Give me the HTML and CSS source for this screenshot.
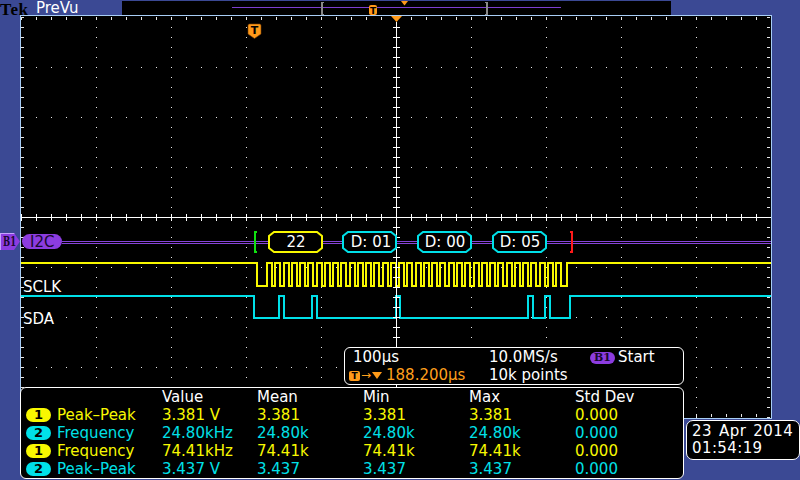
FILE: index.html
```html
<!DOCTYPE html>
<html>
<head>
<meta charset="utf-8">
<link rel="stylesheet" href="styles.css">
</head>
<body>
<div class="scope">
  <header class="topbar">
    <span class="tek">Tek</span>
    <span class="prevu">PreVu</span>
    <div class="recview">
      <svg width="549" height="14" viewBox="122 1 549 14" shape-rendering="crispEdges">
        <rect x="232" y="7" width="329" height="1" fill="#7d3fd0"/>
        <rect x="321" y="2" width="2" height="13" fill="#8a8a8a"/>
        <rect x="321" y="2" width="3" height="1" fill="#8a8a8a"/>
        <rect x="321" y="14" width="3" height="1" fill="#8a8a8a"/>
        <rect x="486" y="2" width="2" height="13" fill="#8a8a8a"/>
        <rect x="485" y="2" width="3" height="1" fill="#8a8a8a"/>
        <rect x="485" y="14" width="3" height="1" fill="#8a8a8a"/>
        <rect x="369" y="5" width="8" height="10" rx="2" fill="#ff9a1a" shape-rendering="auto"/>
        <text x="373" y="13.5" class="mk-t small">T</text>
        <polygon points="401,1 408,1 404.5,5.5" fill="#ff9a1a" shape-rendering="auto"/>
      </svg>
    </div>
  </header>

  <div class="main">
    <div class="gutter">
      <div class="b1tag"><span class="b1txt">B1</span></div>
    </div>
    <div class="screen">
      <svg width="750" height="402" viewBox="21 16 750 402">
        <g stroke="#e6e6e6" stroke-width="1" shape-rendering="crispEdges" fill="none">
          <path d="M96.5,17V418M171.5,17V418M246.5,17V418M321.5,17V418M471.5,17V418M546.5,17V418M621.5,17V418M696.5,17V418" stroke-dasharray="1 9"/>
          <path d="M21,67.5H771M21,117.5H771M21,167.5H771M21,267.5H771M21,317.5H771M21,367.5H771" stroke-dasharray="1 14"/>
          <path d="M21,18.5H771" stroke-width="3" stroke-dasharray="1 14"/>
          <path d="M21,415.5H771" stroke-width="3" stroke-dasharray="1 14"/>
          <path d="M22.5,17V418" stroke-width="3" stroke-dasharray="1 9"/>
          <path d="M768.5,17V418" stroke-width="3" stroke-dasharray="1 9"/>
        </g>

        <path class="sclk" d="M21,263H257V286H267V263H272V286H275V263H280V286H284V263H289V286H292V263H297V286H300V263H305V286H308V263H313V286H317V263H322V286H325V263H330V286H333V263H338V286H341V263H346V286H350V263H355V286H358V263H363V286H366V263H371V286H374V263H379V286H383V263H388V286H391V263H396V286H399V263H404V286H407V263H412V286H416V263H421V286H424V263H429V286H432V263H437V286H440V263H445V286H449V263H454V286H457V263H462V286H465V263H470V286H474V263H479V286H482V263H487V286H490V263H495V286H498V263H503V286H507V263H512V286H515V263H520V286H523V263H528V286H531V263H536V286H540V263H545V286H548V263H553V286H556V263H561V286H567V263H771"/>
        <path class="sda" d="M21,296H254V318H279V296H284V318H312V296H317V318H396V296H400V318H528V296H533V318H545V296H550V318H570V296H771"/>

        <g stroke="#ffffff" fill="none" shape-rendering="crispEdges">
          <path d="M396.5,22V418"/>
          <path d="M396.5,27V418" stroke-width="7" stroke-dasharray="1 9"/>
          <path d="M21,217.5H771"/>
          <path d="M21,217.5H771" stroke-width="7" stroke-dasharray="1 14"/>
        </g>

        <polygon points="391,16 402,16 396.5,22" fill="#ff9a1a"/>
        <path d="M249.5,24H259.5Q261,24 261,25.5V34L254.5,38.5L248,34V25.5Q248,24 249.5,24Z" fill="#ff9a1a" stroke="#7a3d00" stroke-width="0.6"/>
        <text x="254.5" y="34" class="mk-t">T</text>

        <rect x="22" y="234" width="40" height="15" rx="7.5" fill="#8c3ce0"/>
        <text x="30" y="247" class="bustxt">I2C</text>
        <g fill="#8644d8" shape-rendering="crispEdges">
          <rect x="62" y="241" width="709" height="1"/>
          <rect x="62" y="243" width="709" height="1"/>
        </g>
        <g shape-rendering="crispEdges">
          <rect x="254" y="231" width="2" height="22" fill="#10e010"/>
          <rect x="254" y="231" width="3" height="2" fill="#10e010"/>
          <rect x="254" y="251" width="3" height="2" fill="#10e010"/>
          <rect x="571" y="231" width="2" height="22" fill="#ff1a1a"/>
          <rect x="570" y="231" width="3" height="2" fill="#ff1a1a"/>
          <rect x="570" y="251" width="3" height="2" fill="#ff1a1a"/>
        </g>
        <polygon class="pkt ya" points="274,232 317,232 322,236 322,248 317,252 274,252 269,248 269,236"/>
        <text x="296" y="247" class="pkttxt">22</text>
        <polygon class="pkt cy" points="348,232 391,232 396,236 396,248 391,252 348,252 343,248 343,236"/>
        <text x="371" y="247" class="pkttxt">D: 01</text>
        <polygon class="pkt cy" points="423,232 466,232 471,236 471,248 466,252 423,252 418,248 418,236"/>
        <text x="445" y="247" class="pkttxt">D: 00</text>
        <polygon class="pkt cy" points="498,232 541,232 546,236 546,248 541,252 498,252 493,248 493,236"/>
        <text x="520" y="247" class="pkttxt">D: 05</text>

        <text x="23" y="292" class="lbl">SCLK</text>
        <text x="23" y="323.5" class="lbl">SDA</text>
      </svg>
    </div>
  </div>

  <div class="bottom">
    <div class="datebox">
      <div>23 Apr 2014</div>
      <div>01:54:19</div>
    </div>
  </div>

  <div class="info">
    <div>100µs</div>
    <div>10.0MS/s</div>
    <div class="trigsrc"><span class="b1pill">B1</span><span>Start</span></div>
    <div class="trigpos"><span class="tbox">T</span><span class="arrow">→</span><span class="tri"></span><span>188.200µs</span></div>
    <div>10k points</div>
    <div></div>
  </div>

  <div class="meas">
    <div class="row head"><span></span><span></span><span>Value</span><span>Mean</span><span>Min</span><span>Max</span><span>Std Dev</span></div>
    <div class="row y"><span class="ch">1</span><span>Peak–Peak</span><span>3.381 V</span><span>3.381</span><span>3.381</span><span>3.381</span><span>0.000</span></div>
    <div class="row c"><span class="ch">2</span><span>Frequency</span><span>24.80kHz</span><span>24.80k</span><span>24.80k</span><span>24.80k</span><span>0.000</span></div>
    <div class="row y"><span class="ch">1</span><span>Frequency</span><span>74.41kHz</span><span>74.41k</span><span>74.41k</span><span>74.41k</span><span>0.000</span></div>
    <div class="row c"><span class="ch">2</span><span>Peak–Peak</span><span>3.437 V</span><span>3.437</span><span>3.437</span><span>3.437</span><span>0.000</span></div>
  </div>
</div>
</body>
</html>
```

FILE: styles.css
```css
* {
  box-sizing: border-box;
  margin: 0;
  padding: 0;
}

html, body {
  width: 800px;
  height: 480px;
  overflow: hidden;
  background: #3b4994;
}

body {
  font-family: "DejaVu Sans", Verdana, sans-serif;
  font-size: 15px;
  color: #ffffff;
}

.scope {
  position: relative;
  width: 800px;
  height: 480px;
}

/* top bar */
.topbar {
  display: flex;
  align-items: flex-start;
  height: 15px;
}

.tek {
  width: 36px;
  font-family: "Liberation Serif", "Times New Roman", serif;
  font-weight: bold;
  font-size: 17px;
  line-height: 19px;
  height: 15px;
  letter-spacing: 0.6px;
  color: #000000;
}

.prevu {
  width: 86px;
  font-size: 15px;
  line-height: 17.5px;
  height: 15px;
}

.recview {
  margin-top: 1px;
  width: 549px;
  height: 14px;
  background: #000000;
}

.recview svg,
.screen svg {
  display: block;
}

/* main area */
.main {
  display: flex;
  height: 404px;
}

.gutter {
  width: 20px;
  padding-top: 218px;
}

.b1tag {
  width: 20px;
  height: 17px;
  padding-left: 3px;
  background: #8c3ce0;
  clip-path: polygon(0 0, 14px 0, 20px 8.5px, 14px 17px, 0 17px);
  box-shadow: inset 1px 1px 0 #c6a2ff;
  overflow: hidden;
}

.b1txt {
  display: block;
  font-family: "DejaVu Serif", serif;
  font-weight: bold;
  font-size: 13px;
  line-height: 17px;
  color: #1a0830;
  transform: scaleX(0.65);
  transform-origin: left center;
}

.screen {
  width: 752px;
  height: 404px;
  border: 1px solid #a8cdf5;
  background: #000000;
}

.sclk {
  fill: none;
  stroke: #f8f800;
  stroke-width: 2;
  shape-rendering: crispEdges;
}

.sda {
  fill: none;
  stroke: #00e0e8;
  stroke-width: 2;
  shape-rendering: crispEdges;
}

.mk-t {
  font-family: "DejaVu Sans", sans-serif;
  font-weight: bold;
  font-size: 11px;
  fill: #000000;
  text-anchor: middle;
}

.mk-t.small {
  font-size: 9px;
}

.bustxt {
  font-family: "DejaVu Sans", sans-serif;
  font-size: 15px;
  fill: #1a0830;
}

.pkt {
  fill: #000000;
  stroke-width: 2;
}

.pkt.ya {
  stroke: #f8f800;
}

.pkt.cy {
  stroke: #00e0e8;
}

.pkttxt {
  font-family: "DejaVu Sans", sans-serif;
  font-size: 15px;
  fill: #ffffff;
  text-anchor: middle;
}

.lbl {
  font-family: "DejaVu Sans", sans-serif;
  font-size: 15px;
  fill: #ffffff;
}

/* bottom row */
.bottom {
  display: flex;
  justify-content: flex-end;
  padding-top: 1px;
}

.datebox {
  width: 114px;
  height: 40px;
  border: 1px solid #ffffff;
  border-radius: 7px;
  background: #000000;
  padding: 2px 0 0 5px;
  line-height: 17px;
  letter-spacing: 0.4px;
  word-spacing: 2px;
}

/* timebase readout (overlays the graticule) */
.info {
  position: absolute;
  left: 344px;
  top: 347px;
  width: 340px;
  height: 38px;
  border: 1px solid #ffffff;
  border-radius: 6px;
  background: #000000;
  padding-left: 8px;
  display: grid;
  grid-template-columns: 136px 101px 1fr;
  grid-auto-rows: 18px;
  line-height: 18px;
}

.trigsrc {
  display: flex;
  align-items: center;
  gap: 3px;
}

.b1pill {
  display: flex;
  align-items: center;
  justify-content: center;
  width: 25px;
  height: 12px;
  margin-top: 1px;
  border-radius: 6px;
  background: #8c3ce0;
  color: #1a0830;
  font-family: "DejaVu Serif", serif;
  font-weight: bold;
  font-size: 11px;
  line-height: 12px;
}

.trigpos {
  display: flex;
  align-items: center;
  margin-left: -4px;
  color: #ff9f1c;
}

.tbox {
  display: flex;
  align-items: center;
  justify-content: center;
  width: 11px;
  height: 10px;
  margin-top: 2px;
  border-radius: 2px;
  background: #ff9a1a;
  color: #000000;
  font-weight: bold;
  font-size: 9px;
  line-height: 10px;
}

.arrow {
  width: 11px;
  margin-left: 1px;
  font-size: 12px;
  line-height: 18px;
}

.tri {
  width: 0;
  height: 0;
  margin-top: 1px;
  margin-right: 4px;
  border-left: 5.5px solid transparent;
  border-right: 5.5px solid transparent;
  border-top: 7px solid #ff9a1a;
}

/* measurement table (overlays the graticule) */
.meas {
  position: absolute;
  left: 20px;
  top: 387px;
  width: 664px;
  height: 92px;
  border: 1px solid #ffffff;
  border-radius: 6px;
  background: #000000;
  padding-left: 5px;
  display: flex;
  flex-direction: column;
}

.row {
  display: grid;
  grid-template-columns: 31px 105px 95px 106px 106px 106px 1fr;
  height: 18px;
  line-height: 18px;
  align-items: center;
}

.row.head {
  color: #ffffff;
}

.row.y {
  color: #f8f800;
}

.row.c {
  color: #00e0e8;
}

.ch {
  display: flex;
  align-items: center;
  justify-content: center;
  width: 25px;
  height: 14px;
  border-radius: 7px;
  color: #000000;
  font-weight: bold;
  font-size: 13px;
  line-height: 14px;
}

.row.y .ch {
  background: #f8f800;
}

.row.c .ch {
  background: #00e0e8;
}
```
